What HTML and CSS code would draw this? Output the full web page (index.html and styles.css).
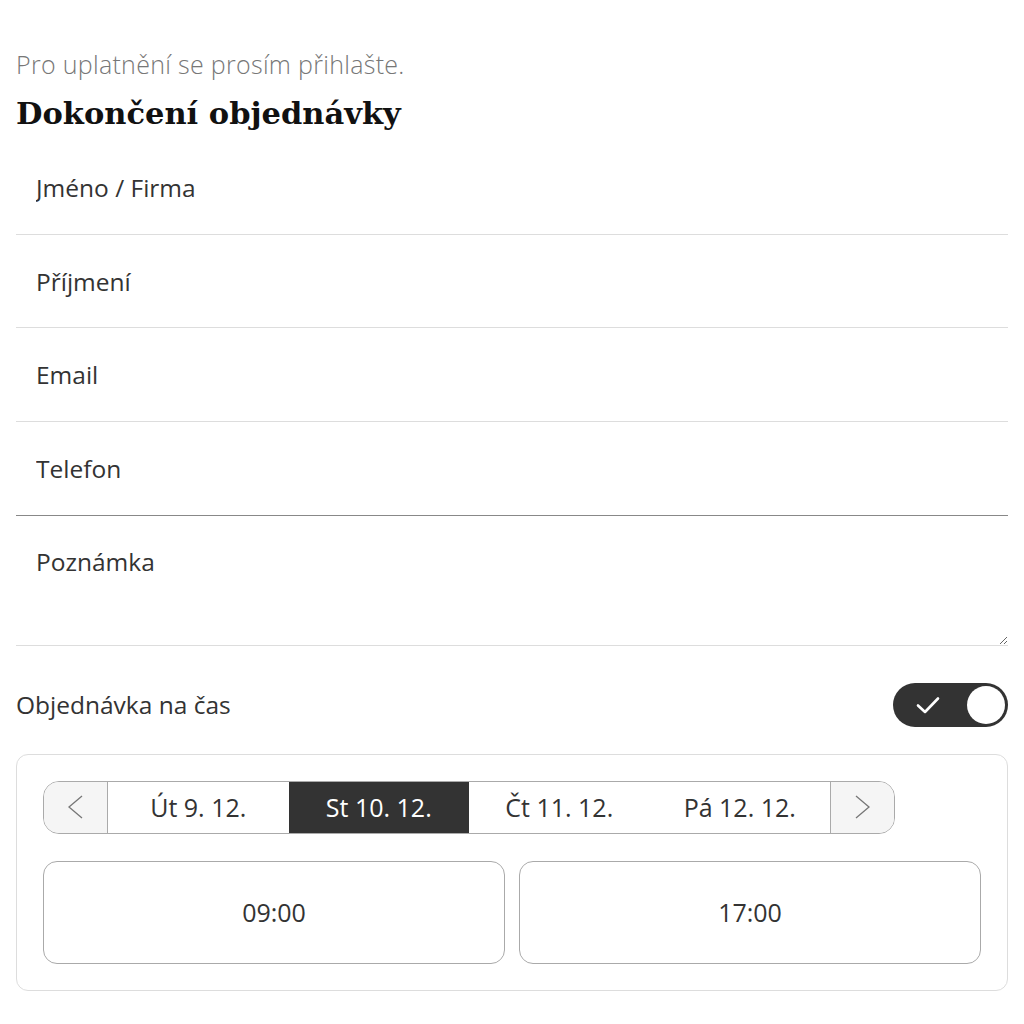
FILE: index.html
```html
<!DOCTYPE html>
<html lang="cs">

<head>
    <meta charset="UTF-8">
    <meta name="viewport" content="width=device-width, initial-scale=1.0">
    <title>Dokončení objednávky</title>
    <link rel="stylesheet" href="styles.css">
</head>

<body>
    <div class="checkout">
        <p class="login-note">Pro uplatnění se prosím přihlašte.</p>
        <h2 class="checkout-title">Dokončení objednávky</h2>

        <div class="form">
            <input type="text" class="field" placeholder="Jméno / Firma">
            <input type="text" class="field" placeholder="Příjmení">
            <input type="email" class="field" placeholder="Email">
            <input type="tel" class="field field-active" placeholder="Telefon">
            <textarea class="field field-note" rows="3" placeholder="Poznámka"></textarea>
        </div>

        <div class="timed-row">
            <span>Objednávka na čas</span>
            <label class="switch">
                <input type="checkbox" checked>
                <span class="switch-track">
                    <svg class="switch-check" width="26" height="20" viewBox="0 0 26 20">
                        <path d="M3 10.5 L10 17 L23 3.5" fill="none" stroke="#fff" stroke-width="2.6" stroke-linecap="round" stroke-linejoin="round"/>
                    </svg>
                    <span class="switch-knob"></span>
                </span>
            </label>
        </div>

        <div class="slot-card">
            <div class="day-nav">
                <button class="day-arrow">
                    <svg width="17" height="24" viewBox="0 0 17 24"><path d="M15 1 L2 12 L15 23" fill="none" stroke="#777" stroke-width="1.3"/></svg>
                </button>
                <button class="day">Út 9. 12.</button>
                <button class="day day-selected">St 10. 12.</button>
                <button class="day">Čt 11. 12.</button>
                <button class="day">Pá 12. 12.</button>
                <button class="day-arrow day-arrow-next">
                    <svg width="17" height="24" viewBox="0 0 17 24"><path d="M2 1 L15 12 L2 23" fill="none" stroke="#777" stroke-width="1.3"/></svg>
                </button>
            </div>
            <div class="slots">
                <button class="slot">09:00</button>
                <button class="slot">17:00</button>
            </div>
        </div>
    </div>
</body>

</html>
```

FILE: styles.css
```css
body {
    font-family: "Open Sans", "Noto Sans", sans-serif;
    margin: 0;
    color: #333;
    background-color: #fff;
}

.checkout {
    padding: 0 16px;
}

.login-note {
    margin: 0;
    padding-top: 48px;
    font-size: 25px;
    line-height: 32px;
    font-weight: 300;
    letter-spacing: 0.3px;
    color: #777;
}

.checkout-title {
    margin: 11px 0 0;
    font-family: "DejaVu Serif", serif;
    font-size: 30.5px;
    line-height: 44px;
    font-weight: bold;
    color: #111;
}

.form {
    display: flex;
    flex-direction: column;
    margin-top: 6px;
}

.field {
    font-family: inherit;
    font-size: 24.5px;
    color: #333;
    height: 93.7px;
    padding: 0 20px;
    border: none;
    border-bottom: 1px solid #ddd;
    box-sizing: border-box;
    outline: none;
    background: #fff;
}

.field::placeholder {
    color: #333;
}

.field-active {
    border-bottom-color: #888;
}

.field-note {
    height: 130px;
    padding-top: 30px;
    line-height: 32px;
    resize: vertical;
}

.timed-row {
    display: flex;
    align-items: center;
    justify-content: space-between;
    margin-top: 37px;
    font-size: 24.5px;
}

.switch input {
    display: none;
}

.switch-track {
    display: flex;
    align-items: center;
    justify-content: space-between;
    width: 115px;
    height: 44px;
    padding: 0 3px 0 22px;
    box-sizing: border-box;
    border-radius: 22px;
    background-color: #333;
}

.switch-knob {
    width: 38px;
    height: 38px;
    border-radius: 50%;
    background-color: #fff;
}

.slot-card {
    margin-top: 27px;
    padding: 26px 26px;
    border: 1px solid #ddd;
    border-radius: 12px;
}

.day-nav {
    display: flex;
    width: 852px;
    height: 53px;
    border: 1px solid #aaa;
    border-radius: 16px;
    box-sizing: border-box;
    overflow: hidden;
}

.day-nav button {
    font-family: inherit;
    border: none;
    background: #fff;
    cursor: pointer;
}

.day-nav .day-arrow {
    width: 64px;
    flex-shrink: 0;
    background-color: #f5f5f5;
    border-right: 1px solid #aaa;
    display: flex;
    align-items: center;
    justify-content: center;
}

.day-nav .day-arrow-next {
    border-right: none;
    border-left: 1px solid #aaa;
}

.day {
    flex: 1;
    font-size: 25px;
    color: #333;
}

.day-nav .day-selected {
    background-color: #333;
    color: #fff;
}

.slots {
    display: flex;
    gap: 14px;
    margin-top: 27px;
}

.slot {
    flex: 1;
    height: 103px;
    font-family: inherit;
    font-size: 25px;
    color: #333;
    background: #fff;
    border: 1px solid #aaa;
    border-radius: 14px;
    cursor: pointer;
}
```
